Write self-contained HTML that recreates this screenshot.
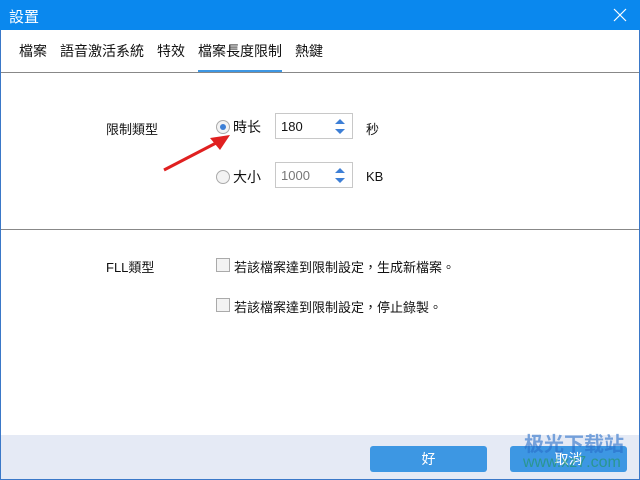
<!DOCTYPE html>
<html><head><meta charset="utf-8"><style>
body{margin:0;width:640px;height:480px;overflow:hidden;background:#fff;font-family:"Liberation Sans","Noto Sans CJK TC",sans-serif;font-size:13px;color:#111;position:relative}
.a{position:absolute}
.title{left:0;top:0;width:640px;height:30px;background:#0a88ee;color:#fff;font-size:15px}
.tab{top:41px;font-size:14px}
.box{border:1px solid #c8c8c8;height:24px;background:#fff}
.radio{width:12px;height:12px;border:1px solid #aaa;border-radius:50%;background:#f3f3f3}
.cb{width:12px;height:12px;border:1px solid #aaa;background:#f3f3f3}
.btn{top:446px;height:26px;background:#3d97e3;color:#fff;font-size:14px;text-align:center;line-height:26px;border-radius:3px}
</style></head><body>
<div class="a title"><span class="a" style="left:9px;top:6px">設置</span>
<svg class="a" style="left:613px;top:8px" width="14" height="14"><path d="M1 1L13 13M13 1L1 13" stroke="#fff" stroke-width="1.2"/></svg></div>
<div class="a" style="left:0;top:30px;width:1px;height:450px;background:#3a78c8"></div>
<div class="a" style="right:0;top:30px;width:1px;height:450px;background:#3a78c8"></div>
<div class="a" style="left:0;bottom:0;width:640px;height:1px;background:#3a78c8"></div>
<span class="a tab" style="left:19px">檔案</span>
<span class="a tab" style="left:60px">語音激活系統</span>
<span class="a tab" style="left:157px">特效</span>
<span class="a tab" style="left:198px">檔案長度限制</span>
<span class="a tab" style="left:295px">熱鍵</span>
<div class="a" style="left:198px;top:70px;width:84px;height:3px;background:#3d97e3"></div>
<div class="a" style="left:1px;top:72px;width:638px;height:1px;background:#888"></div>
<span class="a" style="left:106px;top:119px">限制類型</span>
<div class="a radio" style="left:216px;top:120px"><div class="a" style="left:3px;top:3px;width:6px;height:6px;border-radius:50%;background:#3d7fd6"></div></div>
<span class="a" style="left:233px;top:117px;font-size:14px">時长</span>
<div class="a box" style="left:275px;top:113px;width:76px"><span class="a" style="left:5px;top:5px">180</span>
<svg class="a" style="left:58px;top:4px" width="12" height="17"><path d="M6 1L11 6H1Z M6 16L11 11H1Z" fill="#3d7fd6"/></svg></div>
<span class="a" style="left:366px;top:119px">秒</span>
<div class="a radio" style="left:216px;top:170px"></div>
<span class="a" style="left:233px;top:167px;font-size:14px">大小</span>
<div class="a box" style="left:275px;top:162px;width:76px"><span class="a" style="left:5px;top:5px;color:#777">1000</span>
<svg class="a" style="left:58px;top:4px" width="12" height="17"><path d="M6 1L11 6H1Z M6 16L11 11H1Z" fill="#3d7fd6"/></svg></div>
<span class="a" style="left:366px;top:169px">KB</span>
<svg class="a" style="left:160px;top:130px" width="75" height="45"><path d="M4 40L58 12" stroke="#e02020" stroke-width="3"/><path d="M70 5L50 8L60 20Z" fill="#e02020"/></svg>
<div class="a" style="left:1px;top:229px;width:638px;height:1px;background:#888"></div>
<span class="a" style="left:106px;top:257px">FLL類型</span>
<div class="a cb" style="left:216px;top:258px"></div>
<span class="a" style="left:234px;top:257px">若該檔案達到限制設定，生成新檔案。</span>
<div class="a cb" style="left:216px;top:298px"></div>
<span class="a" style="left:234px;top:297px">若該檔案達到限制設定，停止錄製。</span>
<div class="a" style="left:1px;top:435px;width:638px;height:44px;background:#e5eaf5"></div>
<div class="a btn" style="left:370px;width:117px">好</div>
<div class="a btn" style="left:510px;width:117px">取消</div>
<span class="a" style="left:524px;top:428px;font-size:20px;font-weight:bold;color:rgba(40,110,200,0.6)">极光下载站</span>
<span class="a" style="left:523px;top:454px;font-size:16px;color:rgba(30,150,90,0.6)">www.xz7.com</span>
</body></html>
